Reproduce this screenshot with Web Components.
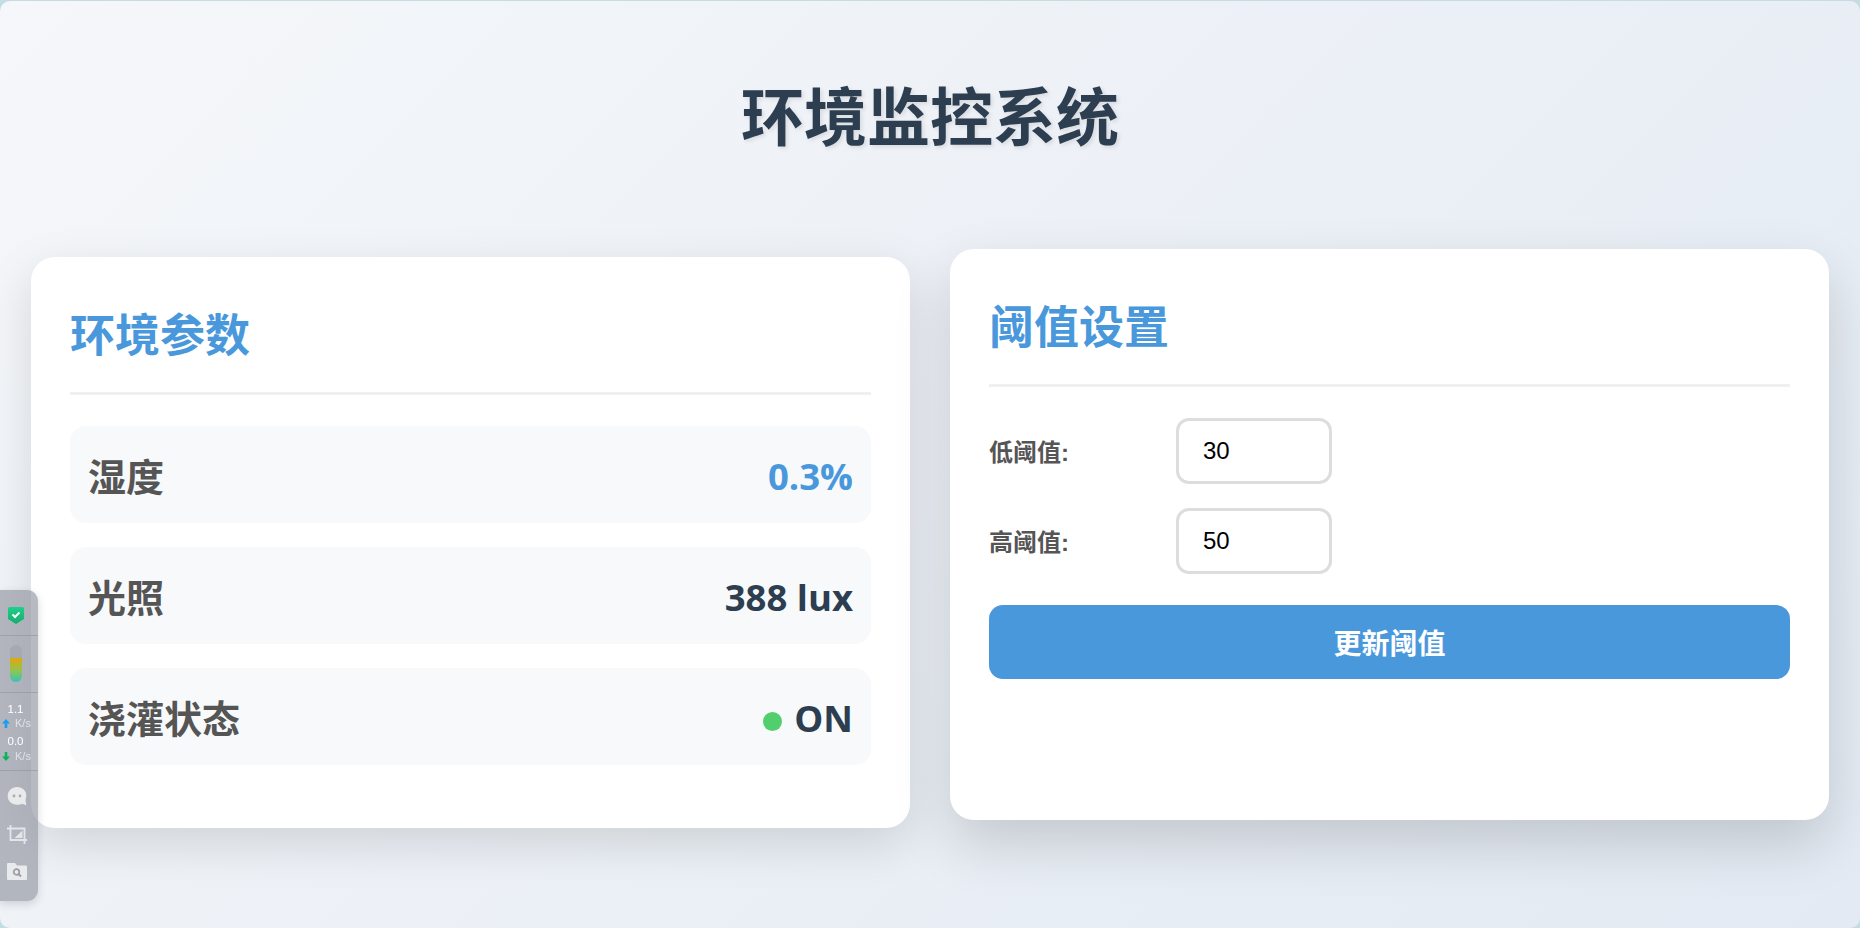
<!DOCTYPE html>
<html lang="zh">
<head>
<meta charset="utf-8">
<title>环境监控系统</title>
<style>
    html, body { margin: 0; height: 100%; background: #c3dde2; }
    body { font-family: "Liberation Sans", "Noto Sans CJK SC", sans-serif; overflow: hidden; }
</style>
</head>
<body>
<env-app>
    <monitor-card slot="left" heading="环境参数" offset="down">
        <param-row label="湿度" value="0.3%" accent></param-row>
        <param-row label="光照" value="388 lux"></param-row>
        <param-row label="浇灌状态" value="ON" dot></param-row>
    </monitor-card>
    <monitor-card slot="right" heading="阈值设置" offset="up">
        <threshold-form></threshold-form>
    </monitor-card>
</env-app>
<side-widget></side-widget>

<script>
class EnvApp extends HTMLElement {
    constructor() {
        super();
        this.attachShadow({ mode: 'open' });
        this.shadowRoot.innerHTML = `
            <style>
                :host {
                    display: block;
                    box-sizing: border-box;
                    height: 927px;
                    margin-top: 1px;
                    border-radius: 10px;
                    background: linear-gradient(135deg, #f5f7fa 0%, #e3eaf3 100%);
                    padding: 0 31px;
                }
                h1 {
                    margin: 0;
                    padding-top: 73px;
                    height: 248px;
                    box-sizing: border-box;
                    text-align: center;
                    font: 700 63px/1.25 "Noto Sans CJK SC", sans-serif;
                    color: #2c3e50;
                    text-shadow: 2px 2px 4px rgba(0, 0, 0, 0.1);
                }
                .cards {
                    display: grid;
                    grid-template-columns: 1fr 1fr;
                    gap: 40px;
                }
            </style>
            <h1>环境监控系统</h1>
            <div class="cards">
                <slot name="left"></slot>
                <slot name="right"></slot>
            </div>
        `;
    }
}

class MonitorCard extends HTMLElement {
    constructor() {
        super();
        this.attachShadow({ mode: 'open' });
        this.shadowRoot.innerHTML = `
            <style>
                :host {
                    display: block;
                    box-sizing: border-box;
                    height: 571px;
                    padding: 40px 39px;
                    background: #fff;
                    border-radius: 24px;
                    box-shadow: 0 16px 48px rgba(0, 0, 0, 0.13);
                }
                :host([offset="down"]) { margin-top: 8px; }
                :host([offset="up"]) {
                    margin-bottom: 8px;
                    box-shadow: 0 24px 56px rgba(0, 0, 0, 0.16);
                }
                h2 {
                    margin: 0 0 31px;
                    height: 98px;
                    box-sizing: border-box;
                    border-bottom: 3px solid #f0f0f0;
                    font: 700 45px/72px "Noto Sans CJK SC", sans-serif;
                    color: #4a98dc;
                }
            </style>
            <h2></h2>
            <slot></slot>
        `;
        this.shadowRoot.querySelector('h2').textContent = this.getAttribute('heading');
    }
}

class ParamRow extends HTMLElement {
    constructor() {
        super();
        this.attachShadow({ mode: 'open' });
        this.shadowRoot.innerHTML = `
            <style>
                :host {
                    display: flex;
                    justify-content: space-between;
                    align-items: center;
                    box-sizing: border-box;
                    height: 97px;
                    margin-bottom: 24px;
                    padding: 0 18px;
                    background: #f8f9fa;
                    border-radius: 16px;
                }
                .label {
                    font: 700 38px/1.4 "Noto Sans CJK SC", sans-serif;
                    color: #555;
                }
                .value {
                    display: flex;
                    align-items: center;
                    padding-top: 4px;
                    font: 700 36.5px/1.4 "Open Sans", "Noto Sans", sans-serif;
                    color: #2c3e50;
                }
                :host([accent]) .value { color: #4a98dc; }
                i {
                    display: none;
                    width: 19px;
                    height: 19px;
                    margin: 5px 12px 0 0;
                    border-radius: 50%;
                    background: #51cf6c;
                }
                :host([dot]) i { display: block; }
            </style>
            <span class="label"></span>
            <span class="value"><i></i><span class="text"></span></span>
        `;
        this.shadowRoot.querySelector('.label').textContent = this.getAttribute('label');
        this.shadowRoot.querySelector('.text').textContent = this.getAttribute('value');
    }
}

class ThresholdForm extends HTMLElement {
    constructor() {
        super();
        this.attachShadow({ mode: 'open' });
        this.shadowRoot.innerHTML = `
            <style>
                :host { display: block; }
                .field {
                    display: flex;
                    align-items: center;
                    margin-bottom: 24px;
                }
                label {
                    width: 187px;
                    margin-top: 3px;
                    font: 700 24px/1.4 "Liberation Sans", "Noto Sans CJK SC", sans-serif;
                    color: #555;
                }
                input {
                    box-sizing: border-box;
                    width: 156px;
                    height: 66px;
                    padding: 0 24px;
                    border: 3px solid #ddd;
                    border-radius: 13px;
                    background: #fff;
                    color: #000;
                    font: 24px "Liberation Sans", sans-serif;
                    outline: none;
                }
                button {
                    display: block;
                    width: 100%;
                    height: 74px;
                    margin-top: 31px;
                    border: 0;
                    border-radius: 14px;
                    background: #4a98dc;
                    color: #fff;
                    font: 700 28px "Liberation Sans", "Noto Sans CJK SC", sans-serif;
                }
            </style>
            <div class="field"><label>低阈值:</label><input type="number" value="30"></div>
            <div class="field"><label>高阈值:</label><input type="number" value="50"></div>
            <button>更新阈值</button>
        `;
    }
}

// floating toolbar stuck on the left edge of the window
class SideWidget extends HTMLElement {
    constructor() {
        super();
        this.attachShadow({ mode: 'open' });
        this.shadowRoot.innerHTML = `
            <style>
                :host {
                    position: fixed;
                    left: 0;
                    top: 590px;
                    width: 38px;
                    height: 311px;
                    display: flex;
                    flex-direction: column;
                    background: rgba(140, 144, 155, 0.62);
                    border-radius: 0 11px 11px 0;
                    box-shadow: 0 3px 8px rgba(0, 0, 0, 0.15);
                    font: 11.500px/14px "Liberation Sans", sans-serif;
                    color: #fff;
                }
                section {
                    display: flex;
                    flex-direction: column;
                    align-items: center;
                    box-sizing: border-box;
                    border-bottom: 1px solid rgba(125, 140, 155, 0.45);
                }
                .shield { height: 46px; padding: 17px 7px 0 0; }
                .gauge { height: 57px; padding: 9px 6px 0 0; }
                .net { height: 78px; padding-top: 9px; }
                .net div { display: flex; align-items: center; height: 14px; width: 38px; }
                .net .num { justify-content: center; padding-right: 7px; box-sizing: border-box; }
                .net .unit { color: #dfe1e5; font-size: 11px; }
                .net .num + .unit + .num { margin-top: 4px; }
                .net .unit:last-child { margin-top: 1px; }
                .net svg { margin: 0 5px 0 2px; flex: none; }
                .tools { border: 0; }
                svg { display: block; }
            </style>
            <section class="shield">
                <svg width="16" height="17" viewBox="0 0 16 17">
                    <defs>
                        <linearGradient id="shd" x1="0" y1="0" x2="0" y2="1">
                            <stop offset="0" stop-color="#1fcf8a"/>
                            <stop offset="1" stop-color="#12ad6a"/>
                        </linearGradient>
                    </defs>
                    <path d="M1.500 0h13A1.500 1.500 0 0 1 16 1.500V12l-8 5-8-5V1.500A1.500 1.500 0 0 1 1.500 0z" fill="url(#shd)"/>
                    <path d="M4.500 7.500l2.500 2.500 4.500-4.500" fill="none" stroke="#fff" stroke-width="2"/>
                </svg>
            </section>
            <section class="gauge">
                <svg width="12" height="37" viewBox="0 0 12 37">
                    <defs>
                        <linearGradient id="lvl" x1="0" y1="0" x2="0" y2="1">
                            <stop offset="0" stop-color="#e0a80c"/>
                            <stop offset=".55" stop-color="#8fc552"/>
                            <stop offset="1" stop-color="#33c3c0"/>
                        </linearGradient>
                    </defs>
                    <rect width="12" height="37" rx="6" fill="#a6a9af"/>
                    <path d="M0 13h12v18a6 6 0 0 1-12 0z" fill="url(#lvl)"/>
                </svg>
            </section>
            <section class="net">
                <div class="num">1.1</div>
                <div class="unit"><svg width="8" height="9" viewBox="0 0 8 9"><path d="M4 0l4 4.500H5.300V9H2.700V4.500H0z" fill="#1b9df0"/></svg>K/s</div>
                <div class="num">0.0</div>
                <div class="unit"><svg width="8" height="9" viewBox="0 0 8 9"><path d="M4 9L0 4.500h2.700V0h2.600v4.500H8z" fill="#0bb45c"/></svg>K/s</div>
            </section>
            <section class="tools">
                <svg style="margin:16px 4px 0 0" width="20" height="19" viewBox="0 0 20 19">
                    <path d="M10 0c5.300 0 9.300 3.700 9.300 8.300 0 2-.7 3.500-.7 6l.7 4-4-1.500c-1.600.7-3.200 1-5.300 1C4.700 17.800.7 13.800.7 9S4.700 0 10 0z" fill="#e9eaec"/>
                    <circle cx="7" cy="9" r="1.400" fill="#a9abb1"/>
                    <circle cx="13" cy="9" r="1.400" fill="#a9abb1"/>
                </svg>
                <svg style="margin:19px 4px 0 0" width="20" height="19" viewBox="0 0 20 19">
                    <path d="M3.500 0v15H20M0 3.500h17.500V19" fill="none" stroke="#e4e5e8" stroke-width="1.800"/>
                    <path d="M7.500 13L15.500 5.500V13z" fill="#e4e5e8"/>
                </svg>
                <svg style="margin:19px 4px 0 0" width="20" height="17" viewBox="0 0 20 17">
                    <path d="M1 0h7l2 2.500h9a1 1 0 0 1 1 1V16a1 1 0 0 1-1 1H1a1 1 0 0 1-1-1V1a1 1 0 0 1 1-1z" fill="#e9eaec"/>
                    <circle cx="9.500" cy="9" r="2.800" fill="none" stroke="#9a9ca3" stroke-width="1.700"/>
                    <path d="M11.500 11l2.500 2.500" stroke="#9a9ca3" stroke-width="1.900"/>
                </svg>
            </section>
        `;
    }
}

customElements.define('env-app', EnvApp);
customElements.define('monitor-card', MonitorCard);
customElements.define('param-row', ParamRow);
customElements.define('threshold-form', ThresholdForm);
customElements.define('side-widget', SideWidget);
</script>
</body>
</html>
